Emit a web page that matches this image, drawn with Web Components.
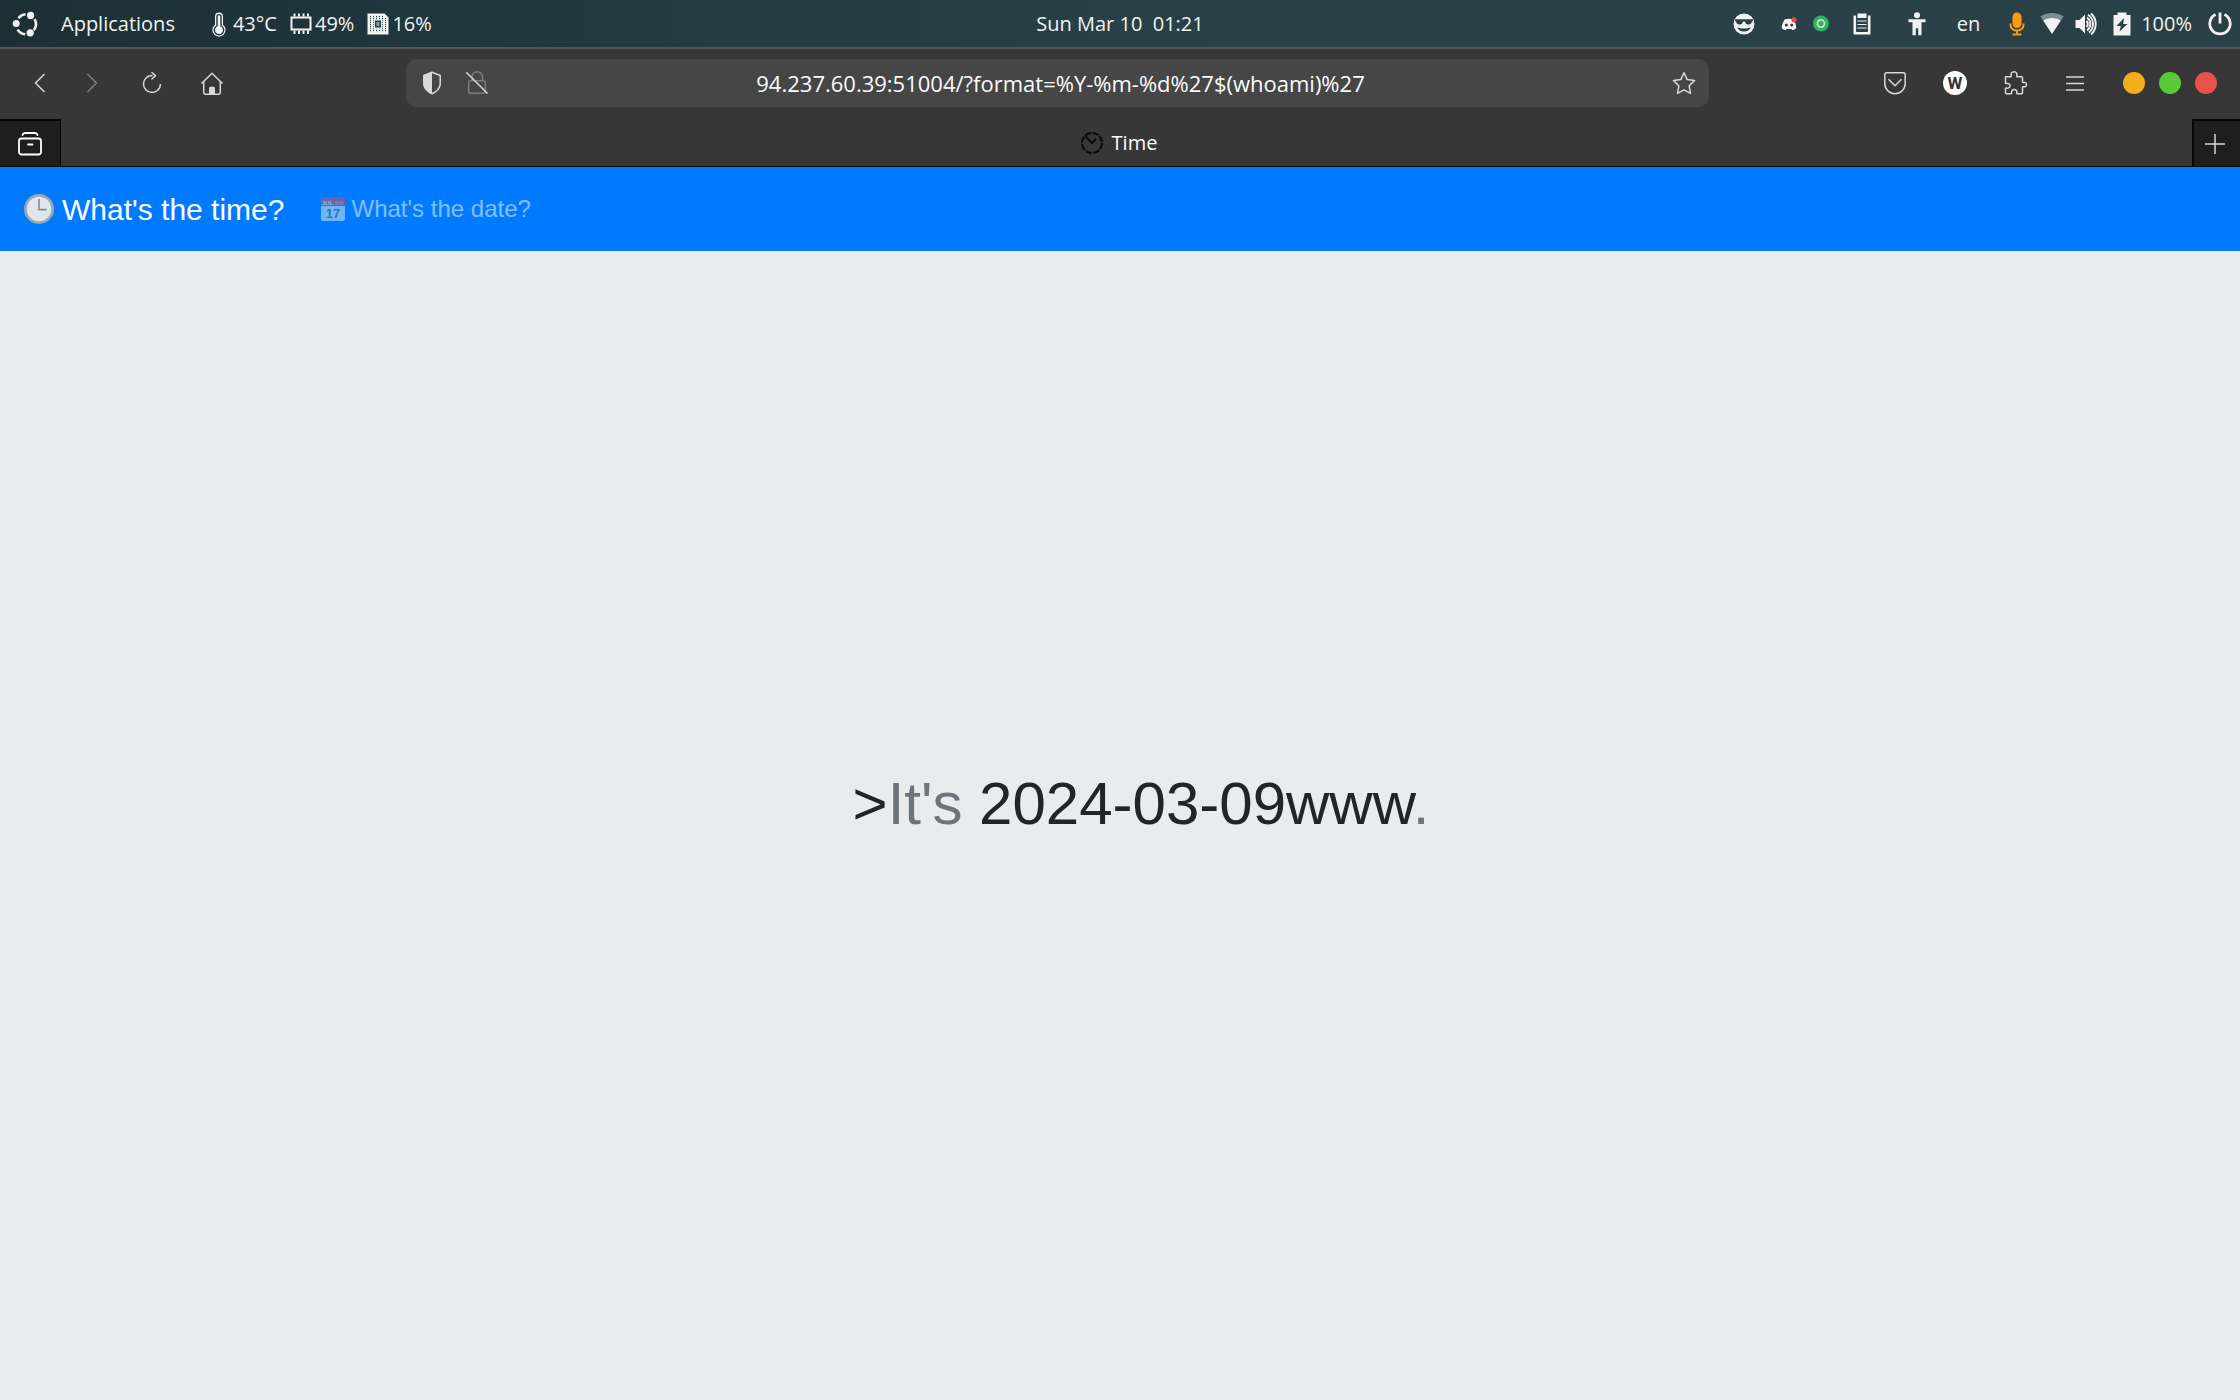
<!DOCTYPE html>
<html lang="en">
<head>
<meta charset="utf-8">
<title>Time</title>
<style>
  html, body { height: 100%; }
  body { margin: 0; background: #e9ecef; }
  desktop-screen { min-height: 100%; }
</style>
</head>
<body>
<desktop-screen></desktop-screen>

<script>
const UI_FONT = '"Open Sans", "Noto Sans", sans-serif';

/* Every icon is drawn on a 24 x 24 grid. */
const ICONS = {
  ubuntu: `<g fill="none" stroke="#f2f2f2" stroke-width="2.6">
      <path d="M12.5 2.3A10 10 0 0 0 5.4 6.2M4.6 17.6A10 10 0 0 0 12.2 22.3M20.8 18.2A10 10 0 0 0 21.6 7.2"/></g>
      <g fill="#f2f2f2"><circle cx="3.2" cy="11.5" r="3.5"/><circle cx="17.6" cy="3.4" r="3.6"/><circle cx="17.2" cy="20.8" r="3.6"/></g>`,
  thermo: `<path fill="#f2f2f2" d="M12 .4a4 4 0 0 0-4 4v8.400a6.600 6.600 0 1 0 8 0V4.400a4 4 0 0 0-4-4z"/>
      <path fill="none" stroke="#1e343a" stroke-width="1.400" d="M10 4.600a2 2 0 0 1 4 0v9.200a4.700 4.700 0 1 1-4 0z"/>
      <path stroke="#f2f2f2" stroke-width="2" d="M12 6v10"/><circle cx="12" cy="17.500" r="3.300" fill="#f2f2f2"/>`,
  chip: `<path fill="none" stroke="#f2f2f2" stroke-width="2" d="M2.500 5.500h19v12h-19z"/>
      <path stroke="#f2f2f2" stroke-width="2" d="M5.500 1.500v3M10 1.500v3M14.500 1.500v3M19 1.500v3M5.500 18.500v3.500M10 18.500v3.500M14.500 18.500v3.500M19 18.500v3.500"/>`,
  cpu: `<path fill="#f2f2f2" d="M1.500 1.500h17l4 4v17h-21z"/>
      <path stroke="#26424a" stroke-width="1" stroke-dasharray="1.200 .8" d="M4.500 4v16M7.500 4v16M10.500 4v16M13.500 4v16M16.500 4v16M19.500 6v14"/>
      <path fill="#26424a" stroke="#f2f2f2" stroke-width="1.200" d="M8.300 7.800h7.400v8.400H8.300z"/>
      <path fill="#f2f2f2" opacity=".5" d="M10.500 10h3v4h-3z"/>`,
  cool: `<circle cx="12" cy="12" r="10.500" fill="#f2f2f2"/>
      <path fill="#294147" d="M3 7.300h18v1.500l-1 .4c-.4 2.400-1.500 3.300-3.300 3.300-2.200 0-3.400-1-3.800-3h-1.800c-.4 2-1.600 3-3.800 3C5.500 12.500 4.400 11.600 4 9.200l-1-.4z"/>
      <path fill="#294147" d="M5 15.200c4 1.700 10 1.700 14 0-1.200 2.800-4 4.300-7 4.300s-5.800-1.500-7-4.300z"/>`,
  discord: `<path fill="#f4f4f4" d="M8 7.300c2.600-.7 5.400-.7 8 0 2 2.600 3.300 6 3.300 9-1.300 1-2.600 1.600-4 1.900l-1-1.500c-1.600.3-3 .3-4.600 0l-1 1.500c-1.400-.3-2.700-.9-4-1.900 0-3.300 1.300-6.400 3.300-9z"/>
      <circle cx="9.300" cy="13" r="1.500" fill="#294147"/><circle cx="14.700" cy="13" r="1.500" fill="#294147"/>
      <circle cx="17" cy="7.800" r="2.600" fill="#ef4444"/>`,
  sync: `<circle cx="12" cy="11.500" r="8" fill="#2fb35f"/>
      <path fill="none" stroke="#f2f2f2" stroke-width="1.300" d="M8.400 10.800a3.700 3.700 0 0 1 6.800-1.200M15.600 12.200a3.700 3.700 0 0 1-6.800 1.200"/>
      <path fill="#f2f2f2" d="M16.500 9.500l-.3 2.500-2.300-1zM7.500 13.500l.3-2.500 2.300 1z"/>`,
  clipboard: `<path fill="#f2f2f2" d="M3.500 3.500h2.600v16.600h11.800V3.500h2.600V22.500h-17z"/>
      <path fill="#f2f2f2" d="M7.500 1.500h9V6h-9z"/><path stroke="#f2f2f2" stroke-width="1.200" d="M7.500 9h9M7.500 12.500h9M7.500 16h9"/>`,
  person: `<circle cx="12" cy="3.300" r="3" fill="#f2f2f2"/><path fill="#f2f2f2" d="M3.500 7.300h17v3h-4v13h-3.300v-7h-2.400v7H7.500v-13h-4z"/>`,
  mic: `<rect x="7.500" y=".5" width="9" height="15.500" rx="4.500" fill="#f99b11"/>
      <path fill="none" stroke="#f99b11" stroke-width="2" d="M5.500 11.500v1.500a6.500 5.500 0 0 0 13 0v-1.500M12 18.500v4M7.500 22.500h9"/>`,
  wifi: `<path fill="#7d8f93" d="M.5 4.500C7-.2 17-.2 23.500 4.500L20.500 9C15 5.500 9 5.500 3.500 9z"/>
      <path fill="#f2f2f2" d="M3.300 8.700c5.200-3.500 12.200-3.500 17.400 0L12 22z"/>`,
  volume: `<path fill="#f2f2f2" d="M.5 8h4L10 2.500v19L4.500 16h-4z"/>
      <path fill="none" stroke="#f2f2f2" stroke-width="1.900" d="M11.500 9a4.500 4.500 0 0 1 0 6M12 5.500a8 8 0 0 1 0 13M13 2.800a11 11 0 0 1 1 17.700M16 1.500a14 14 0 0 1 0 21"/>`,
  battery: `<path fill="#f2f2f2" d="M3.500 3h4V.5h9V3h4v20.500h-17z"/><path fill="#294147" d="M14 6l-7.500 8h4.300L9.500 19.500 17.500 12h-4.300z"/>`,
  power: `<path fill="none" stroke="#f2f2f2" stroke-width="2.800" d="M7.500 2.600a10.200 10.200 0 1 0 9 0M12 .5v11"/>`,

  back: `<path class="l" d="M16.500 3 7.500 12l9 9"/>`,
  forward: `<path class="l" opacity=".45" d="M7.500 3l9 9-9 9"/>`,
  reload: `<path class="l" d="M12.500 4.500A8.500 8.500 0 1 0 20.500 13M11.500 1.200l4 3.400-4 3.700"/>`,
  home: `<path class="l" d="M1.500 12.500 12 2.200l10.500 10.300M3.700 10.700V21.300q0 2 2 2h12.600q2 0 2-2V10.700"/>
      <path fill="#d8d8d8" d="M9 23.300V17.500q0-2 3-2t3 2v5.800z"/>`,
  shield: `<path class="l" d="M12 1.300 20.200 4.500v9.300Q19 19.500 12 22.800 5 19.500 3.800 13.800V4.500z"/><path fill="#d8d8d8" d="M12 1.300v21.500Q5 19.500 3.800 13.800V4.500z"/>`,
  lock: `<g fill="none" stroke="#7c7c7c" stroke-width="1.500"><rect x="3.700" y="9.700" width="16.600" height="12.600" rx="2"/><path d="M7 9.500V6a5 5 0 0 1 10.500 0v3.500"/></g>
      <path stroke="#d8d8d8" stroke-width="1.500" d="M1.300 1.300l21.200 21.200"/>`,
  star: `<path class="l" d="M12 1.800l3.200 6.800 7.300 1-5.300 5.200L18.500 22.300 12 18.800 5.500 22.300 6.800 14.800 1.500 9.600l7.300-1z"/>`,
  pocket: `<path class="l" d="M3.500 1.800h17q1.700 0 1.700 1.700V12.500a10.200 10.200 0 0 1-20.400 0V3.500q0-1.700 1.700-1.700zM5.500 8.200 12 14.700l6.500-6.500"/>`,
  puzzle: `<path class="l" d="M2.500 5.800h5q1 0 .7-1C7.500 3.300 8.500 .8 11 .8S14.500 3.300 13.800 4.800q-.3 1 .7 1h4q1 0 1 1V10.500q0 1.300 1 1 3-.5 3 2t-3 2.200q-1-.2-1 1v5q0 1-1 1H14.500q-1 0-.7-1.200c.4-1.500-.6-3-2.600-3s-3 1.500-2.600 3q.3 1.200-.7 1.200H3.500q-1 0-1-1V17.800q0-1 1.200-.7c1.600.4 3.400-.6 3.400-2.300s-1.800-2.700-3.400-2.300q-1.200.3-1.200-.7z"/>`,
  menu: `<path class="l" d="M3 6h18M3 12.500h18M3 19h18"/>`,
  box: `<g fill="none" stroke="#fff" stroke-width="1.800" stroke-linecap="round"><rect x="1" y="6.500" width="22" height="16" rx="2.500"/><path d="M4.500 3Q5 1 7 1h10q2 0 2.500 2M10 12.500h4.500"/></g>`,
  plus: `<path stroke="#d8d8d8" stroke-width="1.500" d="M12 2v20M2 12h20"/>`,
  timer: `<circle cx="12" cy="12" r="10" fill="none" stroke="#0b0b0b" stroke-width="2.200" stroke-dasharray="6.500 1.350"/>
      <path fill="none" stroke="#0b0b0b" stroke-width="2.200" d="M5.500 5.500 12 12l4-4"/>`,
  clock: `<circle cx="12" cy="12" r="10.900" fill="#e0e7ec" stroke="#9aa8b0" stroke-width="2.200"/>
      <path fill="none" stroke="#7b8d97" stroke-width="1.300" d="M12 4v8.500h6"/>`,
  calendar: `<path fill="#e3edf2" d="M0 8h24v14q0 2-2 2H2q-2 0-2-2z"/><path fill="#dc4a4f" d="M0 0h24v9H0z"/>
      <path stroke="#f3c5c8" stroke-width="1" stroke-dasharray="1.500 .8" d="M14.500 5h8M14.500 7h8"/>
      <text x="1" y="7.500" fill="#fff" font-family="Liberation Sans" font-weight="700" font-size="6">JUL</text>
      <text x="12" y="21" text-anchor="middle" fill="#546e7a" font-family="Liberation Sans" font-weight="700" font-size="13">17</text>`
};

class UiIcon extends HTMLElement {
  connectedCallback() {
    this.attachShadow({ mode: 'open' }).innerHTML = `
      <style>
        :host { display: block; flex: none; width: var(--icon-size, 24px); height: var(--icon-size, 24px); white-space: normal; }
        svg { display: block; width: 100%; height: 100%; overflow: visible; }
        .l { fill: none; stroke: #d8d8d8; stroke-width: 1.5; stroke-linejoin: round; }
      </style>
      <svg viewBox="0 0 24 24" aria-hidden="true">${ICONS[this.getAttribute('name')]}</svg>`;
  }
}

const define = (tag, html) => {
  const template = document.createElement('template');
  template.innerHTML = html;
  customElements.define(tag, class extends HTMLElement {
    constructor() {
      super();
      this.attachShadow({ mode: 'open' }).append(template.content.cloneNode(true));
    }
  });
};

customElements.define('ui-icon', UiIcon);

define('system-panel', `
  <style>
    :host { display: grid; grid-template-columns: 1fr auto 1fr; align-items: center; height: 47px;
      background: linear-gradient(90deg, #1c2f35, #243c43 35%, #294147 60%, #284046);
      border-bottom: 2px solid #555; color: #f2f2f2; font: 20px/28px ${UI_FONT}; }
    time { white-space: pre; }
    div { display: flex; align-items: center; }
    .left { padding-left: 13px; gap: 12px; }
    .apps { margin: 0 20px 0 12px; }
    .stat { display: flex; align-items: center; gap: 2px; }
    .right { justify-content: flex-end; padding-right: 8px; gap: 11px; }
    .chat { gap: 8px; margin: 0 6px 0 10px; }
    .access { gap: 28px; margin: 0 14px 0 20px; }
    .battery { gap: 7px; margin-right: 5px; }
  </style>
  <div class="left"><ui-icon name="ubuntu"></ui-icon><span class="apps">Applications</span>
    <span class="stat"><ui-icon name="thermo"></ui-icon>43°C</span><span class="stat"><ui-icon name="chip"></ui-icon>49%</span><span class="stat"><ui-icon name="cpu"></ui-icon>16%</span></div>
  <time>Sun Mar 10  01:21</time>
  <div class="right">
    <ui-icon name="cool"></ui-icon>
    <div class="chat"><ui-icon name="discord"></ui-icon><ui-icon name="sync"></ui-icon></div>
    <ui-icon name="clipboard"></ui-icon>
    <div class="access"><ui-icon name="person"></ui-icon><span>en</span></div>
    <ui-icon name="mic"></ui-icon><ui-icon name="wifi"></ui-icon><ui-icon name="volume"></ui-icon>
    <div class="battery"><ui-icon name="battery"></ui-icon><span>100%</span></div>
    <ui-icon name="power"></ui-icon>
  </div>`);

define('browser-toolbar', `
  <style>
    :host { display: flex; align-items: center; padding: 10px 23px 12px 28px; background: #373737; }
    button { display: block; flex: none; padding: 0; border: 0; background: none; }
    nav { display: flex; gap: 36px; }
    .back { margin-right: -8px; }
    .address { display: flex; flex: 1; align-items: center; height: 48px; box-sizing: border-box; min-width: 0;
      margin: 0 174px 0 182px; padding: 0 13px 0 14px; border-radius: 11px; background: #464646; }
    .address button + button { margin-left: 21px; }
    input { flex: 1; min-width: 0; padding: 0 40px 0 0; border: 0; outline: 0; background: none; color: #fbfbfb;
      font: 22px/30px ${UI_FONT}; text-align: center; }
    .account { width: 24px; height: 24px; border-radius: 50%; background: #fff; color: #333;
      font: 700 17px/24px Roboto, sans-serif; text-align: center; }
    .windows { display: flex; gap: 14px; margin-left: 36px; }
    .windows button { width: 22px; height: 22px; border-radius: 50%; }
    .minimize { background: #f2af1d; }
    .maximize { background: #58c937; }
    .close { background: #ea514b; }
  </style>
  <nav>
    <button class="back" aria-label="Back"><ui-icon name="back"></ui-icon></button>
    <button aria-label="Forward"><ui-icon name="forward"></ui-icon></button>
    <button aria-label="Reload"><ui-icon name="reload"></ui-icon></button>
    <button aria-label="Home"><ui-icon name="home"></ui-icon></button>
  </nav>
  <div class="address">
    <button aria-label="Protection"><ui-icon name="shield"></ui-icon></button>
    <button aria-label="Connection"><ui-icon name="lock"></ui-icon></button>
    <input type="text" aria-label="Address" value="94.237.60.39:51004/?format=%Y-%m-%d%27$(whoami)%27">
    <button aria-label="Bookmark"><ui-icon name="star"></ui-icon></button>
  </div>
  <nav>
    <button aria-label="Pocket"><ui-icon name="pocket"></ui-icon></button>
    <button class="account">W</button>
    <button aria-label="Extensions"><ui-icon name="puzzle"></ui-icon></button>
    <button aria-label="Menu"><ui-icon name="menu"></ui-icon></button>
  </nav>
  <div class="windows">
    <button class="minimize" aria-label="Minimize"></button>
    <button class="maximize" aria-label="Maximize"></button>
    <button class="close" aria-label="Close"></button>
  </div>`);

define('tab-strip', `
  <style>
    :host { display: flex; height: 47px; background: #373737; border-bottom: 1px solid #0a0a0a; color: #fbfbfb; }
    button { display: flex; align-items: center; justify-content: center; box-sizing: border-box; padding: 0;
      border: 0 solid #050505; border-top-width: 2px; background: #1e1e1e; }
    .view { width: 61px; border-right-width: 1px; }
    .add { width: 48px; border-left-width: 2px; padding-right: 4px; }
    .tab { display: flex; flex: 1; align-items: center; justify-content: center; gap: 8px; padding-right: 16px;
      font: 20px/28px ${UI_FONT}; }
  </style>
  <button class="view" aria-label="Tab overview"><ui-icon name="box"></ui-icon></button>
  <div class="tab"><ui-icon name="timer"></ui-icon><span>Time</span></div>
  <button class="add" aria-label="New tab"><ui-icon name="plus"></ui-icon></button>`);

define('site-navbar', `
  <style>
    :host { display: flex; align-items: center; gap: 37px; height: 84px; padding: 0 24px; background: #007bff;
      font-family: "Liberation Sans", Arial, sans-serif; }
    a { display: flex; align-items: center; gap: 8px; color: #fff; text-decoration: none; }
    .brand { font-size: 30px; line-height: 45px; --icon-size: 30px; }
    .link { gap: 6px; font-size: 24px; line-height: 36px; opacity: .5; }
  </style>
  <a class="brand" href="#time"><ui-icon name="clock"></ui-icon><span>What's the time?</span></a>
  <a class="link" href="#date"><ui-icon name="calendar"></ui-icon><span>What's the date?</span></a>`);

define('time-banner', `
  <style>
    :host { display: flex; flex: 1; align-items: center; justify-content: center; padding: 0 0 44px 42px; background: #e9ecef; }
    h1 { margin: 0; color: #212529; font: 400 60px/72px "Liberation Sans", Arial, sans-serif; }
    ::slotted(span) { color: #6c757d; }
  </style>
  <h1><slot></slot></h1>`);

define('desktop-screen', `
  <style>
    :host { display: flex; flex-direction: column; height: 100%; }
  </style>
  <system-panel></system-panel>
  <browser-toolbar></browser-toolbar>
  <tab-strip></tab-strip>
  <site-navbar></site-navbar>
  <time-banner>&gt;<span>It's</span> 2024-03-09www<span>.</span></time-banner>`);
</script>
</body>
</html>
